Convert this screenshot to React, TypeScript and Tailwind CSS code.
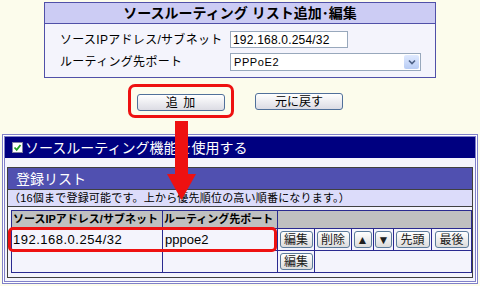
import React from "react";

const F = { fontFamily: "'Liberation Sans', 'Noto Sans CJK JP', sans-serif" };

function SmallBtn({ children, w }: { children: React.ReactNode; w: string }) {
  return (
    <div
      className={`${w} h-[17px] mx-auto flex items-center justify-center rounded-[3px] border border-[#5a7a9a] bg-gradient-to-b from-white to-[#dcdcdc] text-[12px] leading-none text-[#202020]`}
    >
      {children}
    </div>
  );
}

export default function App() {
  return (
    <div
      className="relative w-[480px] h-[286px] overflow-hidden bg-[#fcfcec] text-black"
      style={F}
    >
      {/* top edit box */}
      <div className="mx-auto mt-[2px] w-[392px] border border-[#5050a8]">
        <div className="h-[21px] bg-[#ccccf4] border-b border-[#5050a8] flex items-center justify-center text-[14px] font-bold leading-none">
          ソースルーティング リスト追加･編集
        </div>
        <div className="bg-[#f4f4fc] pl-[15px] pt-[7px] pb-[6px] flex flex-col gap-[5px]">
          <div className="flex items-center h-[17px]">
            <div className="w-[170px] text-[12px] tracking-[0.3px] leading-none">
              ソースIPアドレス/サブネット
            </div>
            <div className="w-[118px] h-[17px] border border-[#98a8bc] bg-white flex items-center pl-[2px] text-[12px] tracking-[0.2px] leading-none">
              192.168.0.254/32
            </div>
          </div>
          <div className="flex items-center h-[18px]">
            <div className="w-[170px] text-[12px] tracking-[0.3px] leading-none">
              ルーティング先ポート
            </div>
            <div className="w-[191px] h-[18px] border border-[#98a8bc] bg-white flex items-center justify-between pl-[3px] pr-[1px]">
              <span className="text-[11px] tracking-[0.6px] leading-none">PPPoE2</span>
              <span className="w-[15px] h-[14px] rounded-[2px] bg-gradient-to-b from-[#e0eaff] to-[#b8ccf4] flex items-center justify-center">
                <svg width="8" height="6" viewBox="0 0 8 6">
                  <path d="M1 1.5 L4 4.5 L7 1.5" stroke="#4d6185" strokeWidth="1.6" fill="none" />
                </svg>
              </span>
            </div>
          </div>
        </div>
      </div>

      {/* buttons */}
      <div className="flex items-start mt-[6px] pl-[128px]">
        <div className="w-[106px] h-[34px] border-[3px] border-[#ee1111] rounded-[7px] pl-[6px] pt-[7px]">
          <div className="w-[88px] h-[17px] flex items-center justify-center rounded-[3px] border border-[#50709a] bg-gradient-to-b from-white to-[#dcdce4] text-[12px] leading-none tracking-[1px]">
            追 加
          </div>
        </div>
        <div className="ml-[21px] mt-[9px] w-[88px] h-[17px] flex items-center justify-center rounded-[3px] border border-[#50709a] bg-gradient-to-b from-white to-[#dcdce4] text-[12px] leading-none">
          元に戻す
        </div>
      </div>

      {/* bottom panel */}
      <div className="mx-[2px] mt-[16px] h-[150px] border border-[#8080c8] p-[1px] bg-white">
        <div className="h-full border border-[#8080c8] bg-[#f4f4fc]">
          <div className="h-[21px] bg-[#000080] flex items-center pl-[7px] text-white">
            <span className="w-[11px] h-[11px] bg-white border border-[#8080a0] flex items-center justify-center">
              <svg width="9" height="9" viewBox="0 0 9 9">
                <path d="M1.5 4.5 L3.7 6.8 L7.5 2" stroke="#22a022" strokeWidth="1.8" fill="none" />
              </svg>
            </span>
            <span className="ml-[2px] text-[14px] leading-none">ソースルーティング機能を使用する</span>
          </div>
          <div className="mt-[9px] mx-[2px] h-[111px] border border-[#404040] bg-[#f4f4fc]">
            <div className="h-[21px] bg-[#5050b0] flex items-center pl-[8px] text-white text-[14px] leading-none">
              登録リスト
            </div>
            <div className="h-[18px] bg-[#dcdcfa] border-y border-[#404040] flex items-center pl-[1px] text-[11px] tracking-[0.2px] leading-none">
              （16個まで登録可能です。上から優先順位の高い順番になります。）
            </div>
            <table className="mt-[3px] ml-[3px] w-[460px] table-fixed border-collapse border border-[#2a2a90] bg-[#f4f4fc]">
              <colgroup>
                <col className="w-[151px]" />
                <col className="w-[115px]" />
                <col className="w-[37px]" />
                <col className="w-[37px]" />
                <col className="w-[22px]" />
                <col className="w-[20px]" />
                <col className="w-[38px]" />
                <col className="w-[40px]" />
              </colgroup>
              <tbody>
                <tr className="h-[18px] bg-[#c0c0c0]">
                  <td className="border border-[#2a2a90] p-0 pl-[1px] text-[11px] font-bold leading-none whitespace-nowrap">
                    ソースIPアドレス/サブネット
                  </td>
                  <td className="border border-[#2a2a90] p-0 pl-[1px] text-[11px] font-bold leading-none whitespace-nowrap">
                    ルーティング先ポート
                  </td>
                  <td colSpan={6} className="border border-[#2a2a90] p-0"></td>
                </tr>
                <tr className="h-[22px]">
                  <td className="border border-[#2a2a90] p-0 pl-[1px] text-[13px] tracking-[0.5px] leading-none">
                    192.168.0.254/32
                  </td>
                  <td className="border border-[#2a2a90] p-0 pl-[2px] text-[13px] leading-none">pppoe2</td>
                  <td className="border border-[#2a2a90] p-0">
                    <SmallBtn w="w-[33px]">編集</SmallBtn>
                  </td>
                  <td className="border border-[#2a2a90] p-0">
                    <SmallBtn w="w-[33px]">削除</SmallBtn>
                  </td>
                  <td className="border border-[#2a2a90] p-0">
                    <SmallBtn w="w-[18px]">▲</SmallBtn>
                  </td>
                  <td className="border border-[#2a2a90] p-0">
                    <SmallBtn w="w-[17px]">▼</SmallBtn>
                  </td>
                  <td className="border border-[#2a2a90] p-0">
                    <SmallBtn w="w-[34px]">先頭</SmallBtn>
                  </td>
                  <td className="border border-[#2a2a90] p-0">
                    <SmallBtn w="w-[34px]">最後</SmallBtn>
                  </td>
                </tr>
                <tr className="h-[22px]">
                  <td className="border border-[#2a2a90] p-0"></td>
                  <td className="border border-[#2a2a90] p-0"></td>
                  <td className="border border-[#2a2a90] p-0">
                    <SmallBtn w="w-[33px]">編集</SmallBtn>
                  </td>
                  <td colSpan={5} className="border border-[#2a2a90] p-0"></td>
                </tr>
              </tbody>
            </table>
          </div>
        </div>
      </div>

      {/* red highlight around row */}
      <div className="absolute left-[8px] top-[227px] w-[269px] h-[25px] border-[3px] border-[#ee1111] rounded-[5px]" />

      {/* red arrow */}
      <svg className="absolute left-[166px] top-[121px]" width="31" height="80" viewBox="0 0 31 80">
        <rect x="9" y="0" width="13" height="54" fill="#ee1111" />
        <path d="M1 53 L30 53 L15.5 79 Z" fill="#ee1111" />
      </svg>
    </div>
  );
}
